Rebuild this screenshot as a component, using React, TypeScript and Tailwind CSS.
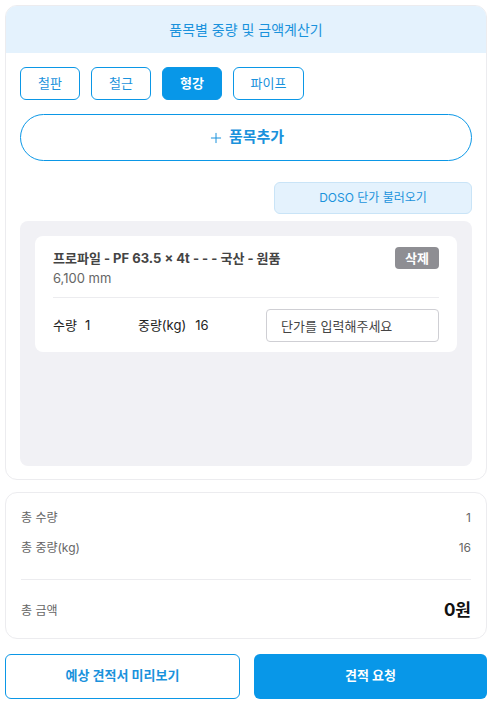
import { useState } from 'react';
import { Plus } from 'lucide-react';

const tabs = ['철판', '철근', '형강', '파이프'];

function App() {
  const [active, setActive] = useState('형강');

  return (
    <div className="flex min-h-[710px] w-full flex-col bg-white px-[5px] pt-[5px] font-['Inter','Noto_Sans_CJK_KR',sans-serif]">
      {/* 계산기 카드 */}
      <section className="overflow-hidden rounded-xl border border-[#ececef]">
        <header className="flex h-[47px] items-center justify-center bg-[#e4f2fd] text-[14px] text-[#1a92dc]">
          품목별 중량 및 금액계산기
        </header>
        <div className="flex flex-col px-[14px] pt-[14px] pb-[13px]">
          <div className="flex gap-[11px]">
            {tabs.map((t) => (
              <button
                key={t}
                type="button"
                onClick={() => setActive(t)}
                className={`h-[33px] rounded-md border border-[#0b97e6] text-[13px] ${
                  t === '파이프' ? 'w-[71px]' : 'w-[60px]'
                } ${t === active ? 'bg-[#0897e8] font-bold text-white' : 'bg-white text-[#1a92dc]'}`}
              >
                {t}
              </button>
            ))}
          </div>
          <button
            type="button"
            className="mt-[14px] flex h-[47px] w-full items-center justify-center gap-[5px] rounded-full border border-[#0b97e6] text-[15px] font-bold text-[#1a92dc]"
          >
            <Plus size={16} strokeWidth={1.5} />
            품목추가
          </button>
          <div className="mt-[21px] flex justify-end">
            <button
              type="button"
              className="h-[32px] w-[198px] rounded-md border border-[#c9e4f7] bg-[#e4f2fd] text-[12px] text-[#1a92dc]"
            >
              DOSO 단가 불러오기
            </button>
          </div>
          <div className="mt-[7px] h-[245px] rounded-lg bg-[#f1f1f5] p-[15px]">
            <div className="rounded-lg bg-white px-[18px] pt-[11px] pb-[10px]">
              <div className="flex items-start justify-between">
                <div className="pt-[2px] leading-[18px]">
                  <p className="text-[13px] font-bold text-[#444]">프로파일 - PF 63.5 × 4t - - - 국산 - 원품</p>
                  <p className="mt-[2px] text-[13px] text-[#666]">6,100 mm</p>
                </div>
                <span className="rounded bg-[#8e8e93] px-[10px] py-[2px] text-[13px] leading-[18px] font-bold text-white">
                  삭제
                </span>
              </div>
              <div className="mt-[10px] mb-[11px] border-t border-[#ececef]" />
              <div className="flex items-center">
                <span className="text-[13px] text-[#222]">수량</span>
                <span className="ml-[8px] w-[53px] text-[13px] text-[#222]">1</span>
                <span className="text-[13px] text-[#222]">중량(kg)</span>
                <span className="ml-[9px] text-[13px] text-[#222]">16</span>
                <input
                  placeholder="단가를 입력해주세요"
                  className="ml-auto h-[33px] w-[173px] rounded border border-[#cfcfd4] px-[14px] text-[13px] text-[#222] placeholder:text-[#444]"
                />
              </div>
            </div>
          </div>
        </div>
      </section>

      {/* 합계 카드 */}
      <section className="mt-[12px] rounded-xl border border-[#ececef] px-[15px] pt-[16px] pb-[14px]">
        <div className="flex items-center justify-between text-[12px] text-[#666]">
          <span>총 수량</span>
          <span>1</span>
        </div>
        <div className="mt-[12px] flex items-center justify-between text-[12px] text-[#666]">
          <span>총 중량(kg)</span>
          <span>16</span>
        </div>
        <div className="mt-[22px] border-t border-[#ececef]" />
        <div className="mt-[18px] flex items-center justify-between">
          <span className="text-[12px] text-[#666]">총 금액</span>
          <span className="text-[17px] font-bold text-[#111]">0원</span>
        </div>
      </section>

      {/* 하단 버튼 */}
      <div className="mt-[15px] flex gap-[14px]">
        <button
          type="button"
          className="h-[45px] flex-1 rounded-md border border-[#0b97e6] bg-white text-[13px] font-bold text-[#1a92dc]"
        >
          예상 견적서 미리보기
        </button>
        <button type="button" className="h-[45px] flex-1 rounded-md bg-[#0897e8] text-[13px] font-bold text-white">
          견적 요청
        </button>
      </div>
    </div>
  );
}

export default App;
